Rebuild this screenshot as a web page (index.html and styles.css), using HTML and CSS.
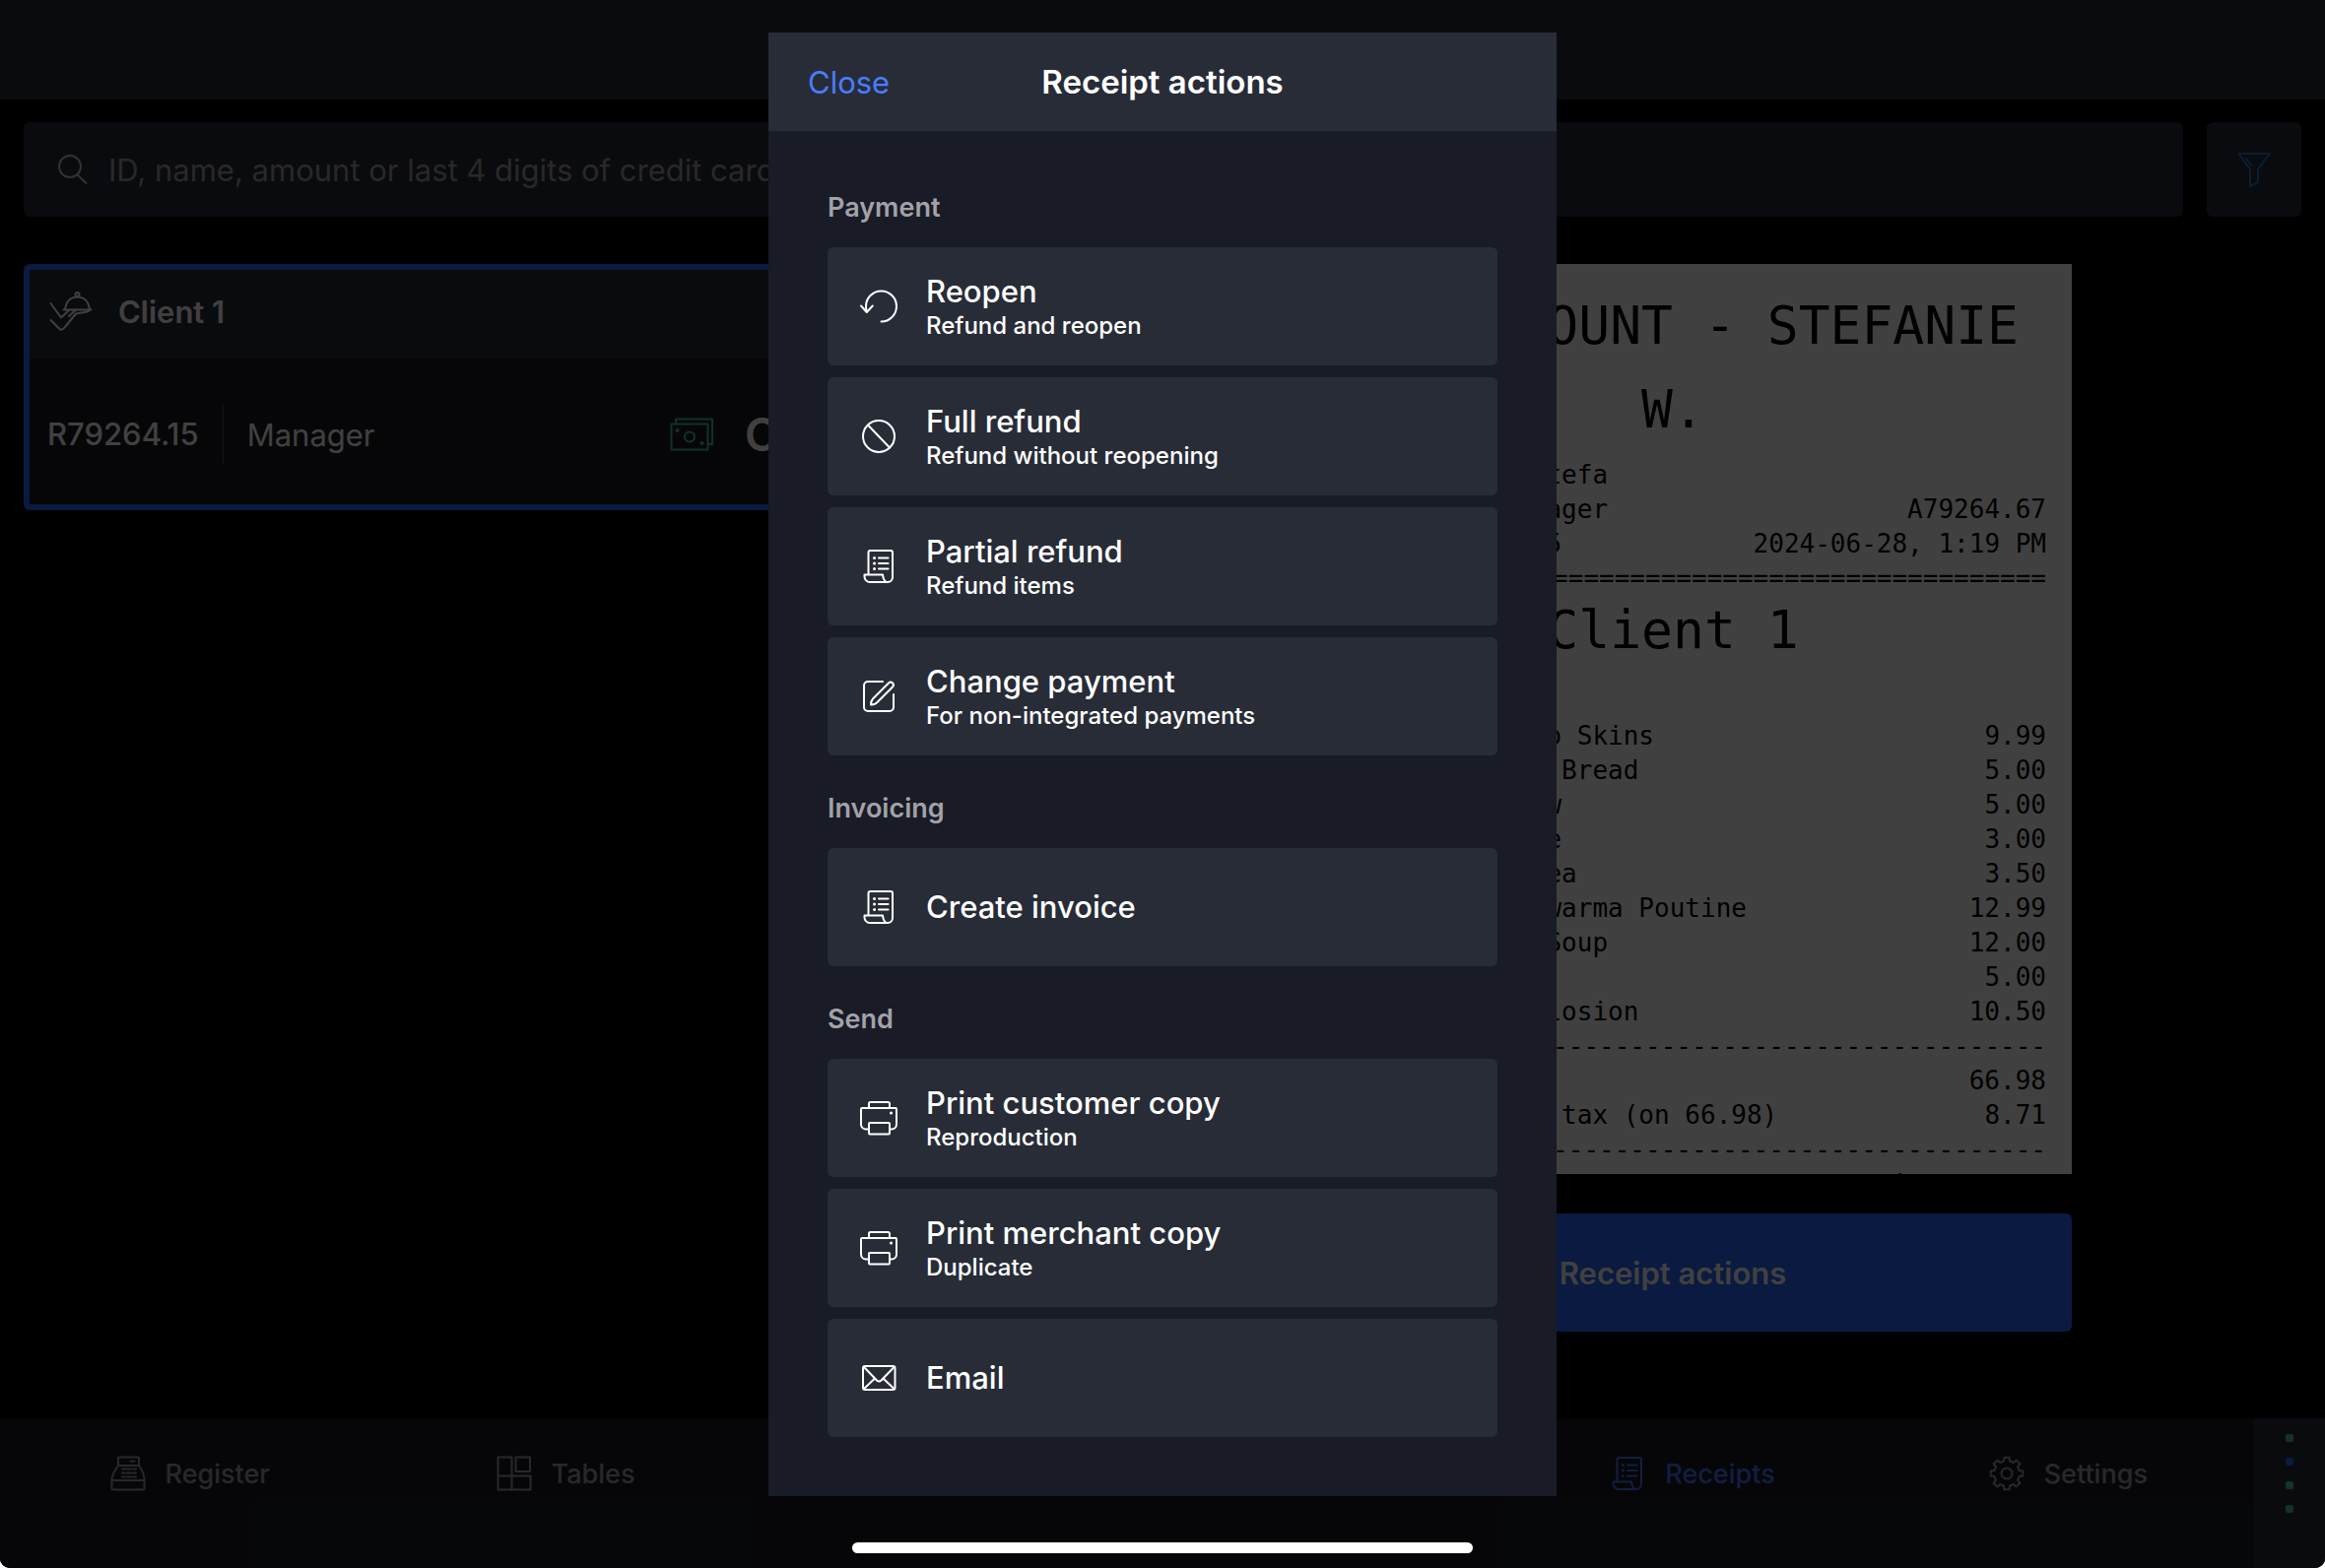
FILE: index.html
```html
<!DOCTYPE html>
<html lang="en">
<head>
    <meta charset="utf-8">
    <title>Receipts</title>
    <link rel="stylesheet" href="styles.css">
</head>
<body>
    <!-- shared icons -->
    <svg class="sprite" aria-hidden="true">
        <symbol id="icon-receipt" viewBox="0 0 40 40">
            <path d="M9.5 28.5V6a2 2 0 0 1 2-2H32a2 2 0 0 1 2 2v25a5 5 0 0 1-5 5H11a5.5 5.5 0 0 1-5.5-5.5v-2H24c.5 3 .5 6 4 7.5"/>
            <path d="M20 11.5h9.5M20 17h9.5M20 22.5h9.5"/>
            <path class="dots" d="M15.5 11.5h.1M15.5 17h.1M15.5 22.5h.1"/>
        </symbol>
        <symbol id="icon-printer" viewBox="0 0 40 40">
            <path d="M10 10V5.5a1.5 1.5 0 0 1 1.5-1.5h18a1.5 1.5 0 0 1 1.5 1.5V10"/>
            <path d="M10 31.5H7a5 5 0 0 1-5-5V11a1 1 0 0 1 1-1h34a1 1 0 0 1 1 1v15.5a5 5 0 0 1-5 5h-2"/>
            <rect x="10" y="25" width="21" height="11.5" rx="1"/>
            <path class="dots" d="M32.5 15h.1"/>
        </symbol>
    </svg>

    <div class="app">
        <header class="topbar"></header>

        <div class="toolbar">
            <label class="search">
                <svg class="search-icon" viewBox="0 0 32 32"><circle cx="13" cy="13" r="11"/><path d="M20.5 21.5l9 8.5"/></svg>
                <input type="text" placeholder="ID, name, amount or last 4 digits of credit card" aria-label="Search receipts">
            </label>
            <button class="filter-btn" aria-label="Filter">
                <svg class="icon" viewBox="0 0 40 40"><path d="M4.5 4h31L24 20v13l-8 4V20zM12 9l5 7"/></svg>
            </button>
        </div>

        <main class="content">
            <section class="list">
                <article class="card">
                    <div class="card-header">
                        <svg class="card-icon" viewBox="0 0 44 44">
                            <circle cx="28.5" cy="5" r="2"/>
                            <path d="M16 20.5C17 12 22 7.5 28.5 7.5S40 12 41 20.5M14.5 20.5h28"/>
                            <path d="M1.5 14L12 28.5l8-7.5M1.5 31L11 40.5c2 .5 4-1 5-2.5L27 24.500l9-1.5c2 0 4-1 5-2.5M20 27l7-6.5"/>
                        </svg>
                        <span>Client 1</span>
                    </div>
                    <div class="card-body">
                        <span class="card-id">R79264.15</span>
                        <span class="card-user">Manager</span>
                        <svg class="cash-icon" viewBox="0 0 44 34">
                            <path d="M6 6V1.5h37V27h-4.5"/>
                            <rect x="1.5" y="6.5" width="37" height="26"/>
                            <circle cx="20" cy="19.5" r="5"/>
                            <circle cx="7.5" cy="13" r="1"/><circle cx="32.5" cy="26" r="1"/>
                        </svg>
                        <span class="card-total">CA$76</span>
                    </div>
                </article>
            </section>

            <section class="detail">
                <div class="receipt">
                    <p class="big">BAR ACCOUNT - STEFANIE W.</p>
                    <table class="info">
                        <tr><td>Customer name: Stefa</td><td></td></tr>
                        <tr><td>Processed by Manager</td><td>A79264.67</td></tr>
                        <tr><td>Receipt R79264.15</td><td>2024-06-28, 1:19 PM</td></tr>
                    </table>
                    <p class="rule">================================================</p>
                    <p class="big client">Client 1</p>
                    <table>
                        <tr><td>1 x Loaded Potato Skins</td><td>9.99</td></tr>
                        <tr><td>1 x Grilled Pita Bread</td><td>5.00</td></tr>
                        <tr><td>1 x Side Coleslaw</td><td>5.00</td></tr>
                        <tr><td>1 x Iced Lemonade</td><td>3.00</td></tr>
                        <tr><td>1 x Iced Green Tea</td><td>3.50</td></tr>
                        <tr><td>1 x Lebanese Shawarma Poutine</td><td>12.99</td></tr>
                        <tr><td>1 x French Leek Soup</td><td>12.00</td></tr>
                        <tr><td>1 x Soda</td><td>5.00</td></tr>
                        <tr><td>1 x Espresso Explosion</td><td>10.50</td></tr>
                    </table>
                    <p class="rule">------------------------------------------------</p>
                    <table>
                        <tr><td>Subtotal</td><td>66.98</td></tr>
                        <tr><td>Harmonized sales tax (on 66.98)</td><td>8.71</td></tr>
                    </table>
                    <p class="rule">------------------------------------------------</p>
                    <p class="rule">signature :</p>
                </div>
                <button class="primary-btn">Receipt actions</button>
            </section>
        </main>

        <footer class="tabbar">
            <nav class="tabs">
                <a href="#" class="tab">
                    <svg class="tab-icon" viewBox="0 0 36 36">
                        <path d="M8 10V2.5a1 1 0 0 1 1-1h19a1 1 0 0 1 1 1V10M8 10h21c3 4 5.5 9 5.5 15v8a1.5 1.5 0 0 1-1.5 1.5H3A1.5 1.5 0 0 1 1.5 33v-8C1.5 19 5 14 8 10zM1.5 25h33"/>
                        <path d="M20.5 5.5h4M12 13.5h3M17 13.5h4M23 13.5h3M12 17.5h3M17 17.5h4M23 17.5h3M12 21.5h3M17 21.5h4M23 21.5h3"/>
                    </svg>
                    Register
                </a>
                <a href="#" class="tab">
                    <svg class="tab-icon" viewBox="0 0 36 36">
                        <path d="M1.5 1.5h14v33h-14zM1.5 20.5h33v14h-33zM19.5 1.5H34V16H19.5z"/>
                    </svg>
                    Tables
                </a>
                <a href="#" class="tab">Orders</a>
                <a href="#" class="tab">Clients</a>
                <a href="#" class="tab active">
                    <svg class="tab-icon" viewBox="2 2 36 36"><use href="#icon-receipt" width="40" height="40"/></svg>
                    Receipts
                </a>
                <a href="#" class="tab">
                    <svg class="tab-icon" viewBox="0 0 36 36">
                        <path d="M15 5.4L15.4 1.7H20.6L21 5.4L24.8 7L27.7 4.6L31.4 8.3L29 11.2L30.6 15L34.3 15.4V20.6L30.6 21L29 24.8L31.4 27.7L27.7 31.4L24.8 29L21 30.6L20.6 34.3H15.4L15 30.6L11.2 29L8.3 31.4L4.6 27.7L7 24.8L5.4 21L1.7 20.6V15.4L5.4 15L7 11.2L4.6 8.3L8.3 4.6L11.2 7z"/>
                        <circle cx="18" cy="18" r="5.5"/>
                    </svg>
                    Settings
                </a>
            </nav>
            <div class="status">
                <span></span>
                <span class="blue"></span>
                <span></span>
                <span></span>
            </div>
        </footer>

        <div class="overlay">
            <div class="modal" role="dialog" aria-labelledby="modalTitle">
                <div class="modal-header">
                    <button class="close-btn">Close</button>
                    <h1 id="modalTitle">Receipt actions</h1>
                </div>
                <div class="modal-body">
                    <h2>Payment</h2>
                    <div class="actions">
                        <button class="action">
                            <svg class="icon" viewBox="0 0 40 40"><path d="M22.5 35.5A15.5 15.5 0 1 0 7 20q0 3 .8 6M2 19.5l5.8 6.5 6-6.5"/></svg>
                            <span class="action-text">Reopen<small>Refund and reopen</small></span>
                        </button>
                        <button class="action">
                            <svg class="icon" viewBox="0 0 40 40"><circle cx="20" cy="20" r="16"/><path d="M9 8.5L31 31.5"/></svg>
                            <span class="action-text">Full refund<small>Refund without reopening</small></span>
                        </button>
                        <button class="action">
                            <svg class="icon"><use href="#icon-receipt"/></svg>
                            <span class="action-text">Partial refund<small>Refund items</small></span>
                        </button>
                        <button class="action">
                            <svg class="icon" viewBox="0 0 40 40">
                                <path d="M24 5H9a4 4 0 0 0-4 4v22a4 4 0 0 0 4 4h22a4 4 0 0 0 4-4V18"/>
                                <path d="M12 28.5c0-2.5.5-4.5 2-6L30 6.5a2.8 2.8 0 0 1 4 4L18 26.5c-2 1.8-4 2.2-6 2z"/>
                            </svg>
                            <span class="action-text">Change payment<small>For non-integrated payments</small></span>
                        </button>
                    </div>

                    <h2>Invoicing</h2>
                    <div class="actions">
                        <button class="action">
                            <svg class="icon"><use href="#icon-receipt"/></svg>
                            <span class="action-text">Create invoice</span>
                        </button>
                    </div>

                    <h2>Send</h2>
                    <div class="actions">
                        <button class="action">
                            <svg class="icon"><use href="#icon-printer"/></svg>
                            <span class="action-text">Print customer copy<small>Reproduction</small></span>
                        </button>
                        <button class="action">
                            <svg class="icon"><use href="#icon-printer"/></svg>
                            <span class="action-text">Print merchant copy<small>Duplicate</small></span>
                        </button>
                        <button class="action">
                            <svg class="icon" viewBox="0 0 40 40">
                                <rect x="4" y="8" width="32.5" height="24" rx="2"/>
                                <path d="M5 9l13 13.5q2.2 2 4.5 0L35.5 9M5 31l11-10.5M35.5 31l-11-10.5"/>
                            </svg>
                            <span class="action-text">Email</span>
                        </button>
                    </div>
                </div>
            </div>
        </div>
        <div class="home-bar"></div>
    </div>
</body>
</html>
```
FILE: styles.css
```css
* {
    margin: 0;
    padding: 0;
    box-sizing: border-box;
}

html {
    background: #fff;
}

body {
    font-family: Inter, "Liberation Sans", sans-serif;
    font-size: 31px;
    color: #fff;
}

button,
input {
    font: inherit;
    color: inherit;
    background: none;
    border: none;
}

button {
    cursor: pointer;
}

svg {
    flex: none;
    fill: none;
    stroke: currentColor;
    stroke-width: 2;
    stroke-linecap: round;
    stroke-linejoin: round;
}

.sprite {
    position: absolute;
    width: 0;
    height: 0;
}

.dots {
    stroke-width: 3;
}

.icon {
    width: 40px;
    height: 40px;
}

.app {
    position: relative;
    display: flex;
    flex-direction: column;
    height: 100vh;
    min-height: 1592px;
    background: #000;
    border-radius: 0 0 10px 10px;
    overflow: hidden;
}

.topbar {
    height: 101px;
    background: #282c38;
}

/* search */
.toolbar {
    display: flex;
    gap: 24px;
    padding: 23px 24px 0;
}

.search {
    flex: 1;
    display: flex;
    align-items: center;
    gap: 20px;
    height: 96px;
    padding: 0 34px;
    background: #282c38;
    border-radius: 6px;
}

.search-icon {
    width: 32px;
    height: 32px;
    color: #c8c8c8;
}

.search input {
    flex: 1;
    min-width: 0;
    outline: none;
}

.search input::placeholder {
    color: #a0a0a4;
    opacity: 1;
}

.filter-btn {
    display: flex;
    align-items: center;
    justify-content: center;
    width: 96px;
    height: 96px;
    background: #282c38;
    border-radius: 6px;
    color: #2878c8;
}

.content {
    flex: 1;
    display: flex;
    min-height: 0;
    padding-top: 48px;
}

/* receipt list */
.list {
    flex: 0 0 1036px;
    padding: 0 24px;
}

.card {
    border: 6px solid #2868ff;
    border-radius: 6px;
    background: #181a24;
}

.card-header {
    display: flex;
    align-items: center;
    gap: 26px;
    height: 90px;
    padding: 0 20px 6px;
    background: #282c38;
    font-weight: 600;
}

.card-icon {
    width: 44px;
    height: 44px;
}

.card-body {
    display: flex;
    align-items: center;
    height: 148px;
    padding: 6px 18px 0;
}

.card-id {
    padding-right: 24px;
    font-weight: 500;
    line-height: 58px;
    border-right: 1px solid #484c58;
}

.card-user {
    flex: 1;
    padding-left: 24px;
}

.cash-icon {
    width: 44px;
    height: 34px;
    margin-right: 32px;
    color: #40c8a0;
}

.card-total {
    width: 232px;
    font-size: 46px;
    font-weight: 600;
}

/* receipt preview */
.detail {
    flex: 1;
    display: flex;
    flex-direction: column;
    align-items: center;
    gap: 40px;
    padding-bottom: 88px;
    min-width: 0;
}

.receipt {
    flex: 1;
    width: 100%;
    max-width: 810px;
    min-height: 0;
    padding: 20px 26px 0;
    overflow: hidden;
    background: #fff;
    color: #000;
    font-family: "DejaVu Sans Mono", "Liberation Mono", monospace;
    font-size: 26px;
    line-height: 35px;
}

.receipt .big {
    font-size: 53px;
    line-height: 85px;
    text-align: center;
}

.receipt .client {
    line-height: 70px;
    margin-bottom: 55px;
}

.receipt table {
    width: 100%;
    border-collapse: collapse;
}

.receipt .info {
    margin-top: 7px;
}

.receipt td {
    white-space: nowrap;
}

.receipt td:last-child {
    text-align: right;
}

.rule {
    text-align: right;
    white-space: nowrap;
}

.primary-btn {
    width: 100%;
    max-width: 810px;
    height: 120px;
    background: #2868ff;
    border-radius: 6px;
    font-weight: 600;
}

/* bottom tabs */
.tabbar {
    display: flex;
    height: 152px;
    background: #181a24;
}

.tabs {
    flex: 1;
    display: flex;
    padding-bottom: 40px;
}

.tab {
    flex: 1;
    display: flex;
    align-items: center;
    justify-content: center;
    gap: 20px;
    padding-left: 4px;
    font-size: 27px;
    font-weight: 500;
    color: #a0a0a4;
    text-decoration: none;
}

.tab.active {
    color: #4878f8;
}

.tab-icon {
    width: 36px;
    height: 36px;
}

.status {
    display: flex;
    flex-direction: column;
    align-items: center;
    gap: 16px;
    width: 72px;
    padding-top: 16px;
    background: #282c38;
}

.status span {
    width: 8px;
    height: 8px;
    border-radius: 2px;
    background: #48cca0;
}

.status .blue {
    background: #2868ff;
}

/* receipt actions dialog */
.overlay {
    position: absolute;
    inset: 0;
    display: flex;
    align-items: center;
    justify-content: center;
    padding-bottom: 40px;
    background: rgba(0, 0, 0, 0.75);
}

.modal {
    width: 800px;
    background: #191b26;
}

.modal-header {
    display: grid;
    grid-template-columns: 1fr auto 1fr;
    align-items: center;
    height: 100px;
    padding: 0 40px;
    background: #282c37;
}

.close-btn {
    justify-self: start;
    color: #4a7cff;
}

.modal-header h1 {
    font-size: 33px;
    font-weight: 600;
}

.modal-body {
    padding: 60px;
}

.modal-body h2 {
    margin-bottom: 22px;
    font-size: 27px;
    font-weight: 600;
    line-height: 36px;
    color: #a2a2a8;
}

.actions {
    display: flex;
    flex-direction: column;
    gap: 12px;
}

.actions + h2 {
    margin-top: 36px;
}

.action {
    display: flex;
    align-items: center;
    gap: 28px;
    height: 120px;
    padding: 0 32px;
    background: #282c37;
    border-radius: 6px;
    text-align: left;
}

.action-text {
    font-weight: 500;
    line-height: 36px;
}

.action-text:has(small) {
    padding-top: 4px;
}

.action-text small {
    display: block;
    font-size: 24px;
    line-height: 34px;
}

.home-bar {
    position: absolute;
    bottom: 15px;
    left: 50%;
    width: 630px;
    height: 11px;
    margin-left: -315px;
    border-radius: 6px;
    background: #fff;
}
```
